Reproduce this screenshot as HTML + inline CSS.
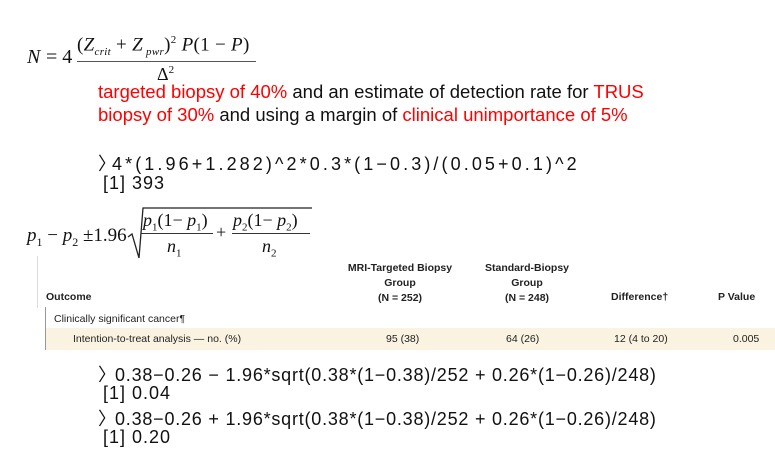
<!DOCTYPE html>
<html><head><meta charset="utf-8"><style>
body{margin:0;width:775px;height:455px;background:#fff;position:relative;overflow:hidden;font-family:"Liberation Sans","DejaVu Sans",sans-serif;}
.a{position:absolute;white-space:nowrap;}
.m{font-family:"Liberation Serif",serif;color:#111;}
.i{font-style:italic;}
.r{color:#f00;}
.t{font-size:18px;color:#111;}
.tb{font-size:10.5px;color:#222;}
.b{font-weight:bold;}
</style></head><body>
<!-- formula 1 -->
<div class="a m i" style="left:27px;top:46px;font-size:20px;">N</div>
<div class="a m" style="left:46px;top:46px;font-size:20px;">= 4</div>
<div class="a m" style="left:77px;top:34px;font-size:19px;letter-spacing:0.3px">(<span class="i">Z</span><sub class="i" style="font-size:11px">crit</sub> + <span class="i">Z</span><sub class="i" style="font-size:11px"> pwr</sub>)<sup style="font-size:11px">2</sup> <span class="i">P</span>(1 − <span class="i">P</span>)</div>
<div class="a" style="left:77px;top:61px;width:179px;height:1px;background:#555;"></div>
<div class="a m" style="left:157px;top:64px;font-size:18px;">Δ<sup style="font-size:11px">2</sup></div>
<!-- red text -->
<div class="a t" style="left:98px;top:81px;font-size:18.5px;"><span class="r">targeted biopsy of 40%</span> and an estimate of detection rate for <span class="r">TRUS</span></div>
<div class="a t" style="left:98px;top:104px;font-size:18.5px;"><span class="r">biopsy of 30%</span> and using a margin of <span class="r">clinical unimportance of 5%</span></div>
<!-- code -->
<div class="a t" style="left:98px;top:150px;"><span style="display:inline-block;width:14px">〉</span><span style="letter-spacing:3.1px">4*(1.96+1.282)^2*0.3*(1−0.3)/(0.05+0.1)^2</span></div>
<div class="a t" style="left:103px;top:173px;letter-spacing:1px">[1] 393</div>
<!-- formula 2 -->
<div class="a m" style="left:27px;top:225px;font-size:19px;"><span class="i">p</span><sub style="font-size:12px">1</sub> − <span class="i">p</span><sub style="font-size:12px">2</sub> ±1.96</div>
<svg class="a" style="left:127px;top:205px" width="190" height="56"><path d="M1 32 L5 29 L12 53 L16 3 L185 3" fill="none" stroke="#222" stroke-width="1.3"/></svg>
<div class="a m" style="left:143px;top:210px;font-size:18px;"><span class="i">p</span><sub style="font-size:11px">1</sub>(1− <span class="i">p</span><sub style="font-size:11px">1</sub>)</div>
<div class="a" style="left:141px;top:233px;width:72px;height:1px;background:#333"></div>
<div class="a m i" style="left:167px;top:236px;font-size:18px;">n<sub style="font-size:11px;font-style:normal">1</sub></div>
<div class="a m" style="left:216px;top:222px;font-size:18px;">+</div>
<div class="a m" style="left:233px;top:210px;font-size:18px;"><span class="i">p</span><sub style="font-size:11px">2</sub>(1− <span class="i">p</span><sub style="font-size:11px">2</sub>)</div>
<div class="a" style="left:232px;top:233px;width:78px;height:1px;background:#333"></div>
<div class="a m i" style="left:262px;top:236px;font-size:18px;">n<sub style="font-size:11px;font-style:normal">2</sub></div>
<!-- table -->
<div class="a" style="left:37px;top:256px;width:1px;height:52px;background:#ddd"></div>
<div class="a" style="left:45px;top:307px;width:1px;height:43px;background:#999"></div>
<div class="a" style="left:46px;top:328px;width:729px;height:22px;background:#fbf3e1"></div>
<div class="a tb b" style="left:46px;top:291px;">Outcome</div>
<div class="a tb b" style="left:400px;top:261px;width:120px;margin-left:-60px;text-align:center;line-height:15px;white-space:normal">MRI-Targeted Biopsy<br>Group<br>(N = 252)</div>
<div class="a tb b" style="left:527px;top:261px;width:110px;margin-left:-55px;text-align:center;line-height:15px;white-space:normal">Standard-Biopsy<br>Group<br>(N = 248)</div>
<div class="a tb b" style="left:611px;top:291px;">Difference†</div>
<div class="a tb b" style="left:718px;top:291px;">P Value</div>
<div class="a tb" style="left:54px;top:313px;">Clinically significant cancer¶</div>
<div class="a tb" style="left:73px;top:333px;">Intention-to-treat analysis — no. (%)</div>
<div class="a tb" style="left:386px;top:333px;">95 (38)</div>
<div class="a tb" style="left:506px;top:333px;">64 (26)</div>
<div class="a tb" style="left:614px;top:333px;">12 (4 to 20)</div>
<div class="a tb" style="left:733px;top:333px;">0.005</div>
<!-- code 2 -->
<div class="a t" style="left:98px;top:361px;"><span style="display:inline-block;width:17px">〉</span><span style="letter-spacing:0.78px">0.38−0.26 − 1.96*sqrt(0.38*(1−0.38)/252 + 0.26*(1−0.26)/248)</span></div>
<div class="a t" style="left:103px;top:383px;letter-spacing:1px">[1] 0.04</div>
<div class="a t" style="left:98px;top:405px;"><span style="display:inline-block;width:17px">〉</span><span style="letter-spacing:0.78px">0.38−0.26 + 1.96*sqrt(0.38*(1−0.38)/252 + 0.26*(1−0.26)/248)</span></div>
<div class="a t" style="left:103px;top:427px;letter-spacing:1px">[1] 0.20</div>
</body></html>
